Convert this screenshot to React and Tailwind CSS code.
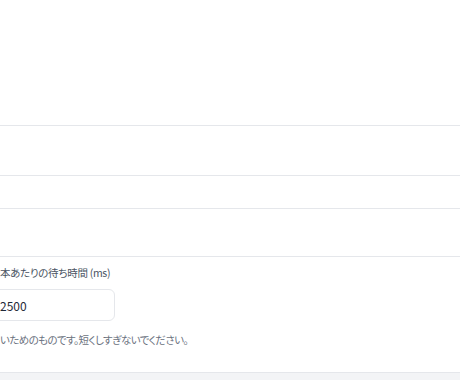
export default function App() {
  return (
    <div
      className="w-[460px] h-[380px] overflow-hidden bg-white flex flex-col [font-feature-settings:'palt']"
      style={{ fontFamily: '"Noto Sans CJK JP", "Noto Sans", sans-serif' }}
    >
      {/* empty header area */}
      <div className="h-[125px] shrink-0" />

      {/* list rows */}
      <div className="shrink-0 border-t border-[#e5e7eb] h-[50px]" />
      <div className="shrink-0 border-t border-[#e5e7eb] h-[33px]" />
      <div className="shrink-0 border-t border-[#e5e7eb] h-[48px]" />

      {/* wait time field */}
      <div className="shrink-0 border-t border-[#e5e7eb] pt-[7px] pb-[23px] -ml-[11px]">
        <label className="block text-[10.5px] leading-[18px] tracking-[-0.3px] text-[#4b5563]">
          <span className="inline-block w-[11px]">件</span>本あたりの待ち時間 (ms)
        </label>
        <input
          type="text"
          defaultValue="2500"
          className="mt-[7px] block w-[126px] h-[32px] rounded-[6px] border border-[#e5e7eb] pl-[10px] text-[12px] text-[#1f2937] outline-none"
        />
        <p className="mt-[10px] text-[10.5px] leading-[18px] tracking-[-0.6px] text-[#6b7280]">
          <span className="inline-block w-[11px]">な</span>いためのものです。短くしすぎないでください。
        </p>
      </div>

      {/* footer band */}
      <div className="flex-1 border-t border-[#e5e7eb] bg-[#f3f4f6]" />
    </div>
  );
}
